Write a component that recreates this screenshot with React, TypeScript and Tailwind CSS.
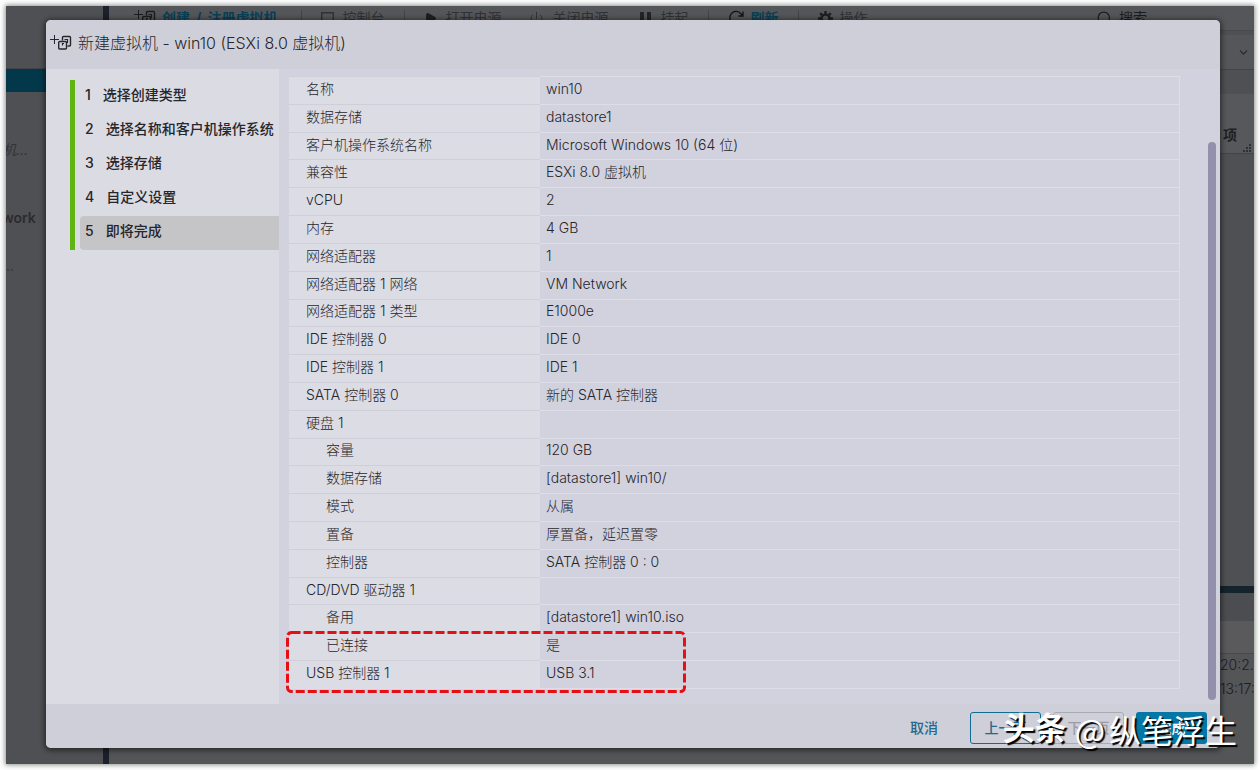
import React from "react";
import { Play, Power, Search, ChevronDown } from "lucide-react";

type Row = { label: string; value: string; nested?: boolean };

const rows: Row[] = [
  { label: "名称", value: "win10" },
  { label: "数据存储", value: "datastore1" },
  { label: "客户机操作系统名称", value: "Microsoft Windows 10 (64 位)" },
  { label: "兼容性", value: "ESXi 8.0 虚拟机" },
  { label: "vCPU", value: "2" },
  { label: "内存", value: "4 GB" },
  { label: "网络适配器", value: "1" },
  { label: "网络适配器 1 网络", value: "VM Network" },
  { label: "网络适配器 1 类型", value: "E1000e" },
  { label: "IDE 控制器 0", value: "IDE 0" },
  { label: "IDE 控制器 1", value: "IDE 1" },
  { label: "SATA 控制器 0", value: "新的 SATA 控制器" },
  { label: "硬盘 1", value: "" },
  { label: "容量", value: "120 GB", nested: true },
  { label: "数据存储", value: "[datastore1] win10/", nested: true },
  { label: "模式", value: "从属", nested: true },
  { label: "置备", value: "厚置备，延迟置零", nested: true },
  { label: "控制器", value: "SATA 控制器 0 : 0", nested: true },
  { label: "CD/DVD 驱动器 1", value: "" },
  { label: "备用", value: "[datastore1] win10.iso", nested: true },
  { label: "已连接", value: "是", nested: true },
  { label: "USB 控制器 1", value: "USB 3.1" },
];

const steps = ["选择创建类型", "选择名称和客户机操作系统", "选择存储", "自定义设置", "即将完成"];

function NewVmIcon() {
  return (
    <svg width="24" height="18" viewBox="0 0 24 18" fill="none" stroke="currentColor" aria-hidden="true">
      <path d="M0 5.5H9M4.5 1V10" />
      <path d="M12.5 6.5V3.5Q12.5 2.5 13.5 2.5H19.5Q20.5 2.5 20.5 3.5V11Q20.5 12 19.5 12H17.5" strokeWidth="1.4" />
      <rect x="8.7" y="7.5" width="7.8" height="7.5" rx="1" strokeWidth="1.4" />
      <path d="M12.5 11.5V9.5H14M14.5 5.5H17.5V9" strokeWidth="1.2" />
    </svg>
  );
}

function RefreshIcon() {
  return (
    <svg width="16" height="16" viewBox="0 0 16 16" fill="none" stroke="currentColor" strokeWidth="1.3" aria-hidden="true">
      <path d="M14 10A6.3 6.3 0 1 1 13 3.8L15 6M15 1.5V6H10.5" />
    </svg>
  );
}

function GearIcon() {
  return (
    <svg width="15" height="15" viewBox="0 0 15 15" fill="none" stroke="currentColor" aria-hidden="true">
      <circle cx="7.5" cy="7.5" r="4" strokeWidth="2.6" />
      <path d="M7.5 0V3M7.5 12V15M0 7.5H3M12 7.5H15M2.2 2.2L4.3 4.3M10.7 10.7L12.8 12.8M2.2 12.8L4.3 10.7M10.7 4.3L12.8 2.2" strokeWidth="2.4" />
    </svg>
  );
}

function Separator() {
  return (
    <span className="flex w-10 justify-center">
      <span className="h-4 w-px bg-[#434447]" />
    </span>
  );
}

function Toolbar() {
  return (
    <div className="flex h-[25px] shrink-0 items-center border-b border-[#48494c] bg-[#555659] pl-[25px] pr-1 text-sm text-[#303134]">
      <button className="mr-1 flex items-center gap-1 font-bold text-[#083f55]">
        <span className="text-[#1b1c1f]"><NewVmIcon /></span>
        <span className="flex gap-1.5"><span>创建</span><span>/</span><span>注册虚拟机</span></span>
      </button>
      <Separator />
      <button className="flex items-center gap-2">
        <svg width="13" height="13" viewBox="0 0 13 13" fill="none" stroke="currentColor" strokeWidth="1.4" aria-hidden="true">
          <path d="M0.7 0.7H12.3V10.5H0.7ZM3 12.3H10" />
        </svg>
        控制台
      </button>
      <Separator />
      <button className="flex items-center gap-2">
        <Play size={13} fill="currentColor" className="text-[#1e1f22]" />
        打开电源
      </button>
      <button className="ml-7 flex items-center gap-2">
        <Power size={15} strokeWidth={1.5} />
        关闭电源
      </button>
      <button className="ml-8 flex items-center gap-2">
        <svg width="12" height="12" viewBox="0 0 12 12" fill="#232427" aria-hidden="true">
          <path d="M0 0H4V12H0ZM7 0H11V12H7Z" />
        </svg>
        挂起
      </button>
      <Separator />
      <button className="flex items-center gap-1.5 font-bold text-[#083f55]">
        <span className="text-[#111214]"><RefreshIcon /></span>
        刷新
      </button>
      <Separator />
      <button className="flex items-center gap-1.5">
        <span className="text-[#1e1f22]"><GearIcon /></span>
        操作
      </button>
      <span className="ml-auto flex w-[154px] items-center gap-1.5 text-[#1b1c1f]">
        <Search size={17} strokeWidth={1.7} />
        搜索
      </span>
    </div>
  );
}

function Backdrop() {
  return (
    <div className="flex h-full min-h-0 w-full overflow-hidden bg-[#4f5053]">
      <div className="flex w-[97px] shrink-0 flex-col text-sm text-[#2a2b2e]">
        <div className="h-[63px] border-b border-[#434447]" />
        <div className="h-[23px] bg-[#03384b]" />
        <p className="mt-12 h-5 italic text-[#333437]"><span className="-ml-1">机...</span></p>
        <p className="mt-12 h-6 font-semibold"><span className="-ml-1">work</span></p>
        <p className="mt-6 h-5 text-[#333437]"><span className="-ml-1">...</span></p>
      </div>
      <div className="w-1.5 shrink-0 bg-[#1b202b]" />
      <div className="flex min-w-0 flex-1 flex-col">
        <Toolbar />
        <div className="mt-1 flex h-[35px] shrink-0 items-center justify-end border-b border-[#434447] bg-[#555659] pr-1">
          <ChevronDown size={13} className="text-[#242528]" />
        </div>
        <div className="h-6 shrink-0" />
        <div className="flex h-[60px] shrink-0 items-end justify-end border-b border-[#434447] bg-[#57585b] pr-0.5 text-sm font-semibold text-[#1e1f22]">
          <span className="pb-2 pr-1.5">项</span>
          <svg width="9" height="9" viewBox="0 0 9 9" fill="#303134" aria-hidden="true">
            <path d="M6 0h2v2h-2zM3 3h2v2h-2zM6 3h2v2h-2zM0 6h2v2h-2zM3 6h2v2h-2zM6 6h2v2h-2z" />
          </svg>
        </div>
        <div className="flex-1" />
        <div className="h-[7px] shrink-0 bg-[#14232c]" />
        <div className="h-7 shrink-0 bg-[#4c4d51]" />
        <div className="h-8 shrink-0 bg-[#5a5a5c]" />
        <div className="flex h-[111px] shrink-0 flex-col items-end border-t border-[#48494c] bg-[#545557] text-sm font-light text-[#1b1c1f]">
          <span className="w-[34px] whitespace-nowrap leading-[22px]">20:2...</span>
          <span className="w-[34px] whitespace-nowrap leading-[26px]">13:17:</span>
        </div>
      </div>
    </div>
  );
}

function Steps() {
  return (
    <nav className="w-[233px] shrink-0 bg-[#dbdbe3] pl-6 pt-[11px] font-medium">
      <ol className="border-l-[5px] border-[#60b515]">
        {steps.map((step, i) => {
          const active = i === steps.length - 1;
          return (
            <li
              key={step}
              aria-current={active ? "step" : undefined}
              className={
                active
                  ? "ml-[5px] flex h-[34px] items-center gap-3 rounded-l bg-[#c5c5c8] pb-1 pl-[5px]"
                  : "ml-[5px] flex h-[34px] items-center gap-3 pb-1 pl-[5px]"
              }
            >
              <span>{i + 1}</span>
              <span className="whitespace-nowrap">{step}</span>
            </li>
          );
        })}
      </ol>
    </nav>
  );
}

function Summary() {
  return (
    <div className="relative flex min-w-0 flex-1">
      <table className="w-full table-fixed border-collapse border-y border-r border-[#dddde7] text-left">
        <tbody>
          {rows.map((row, i) => (
            <tr key={i}>
              <th
                scope="row"
                className={
                  row.nested
                    ? "w-[251px] border-t border-[#cfcfd9] bg-[#dcdce4] p-0 pb-[3px] pl-[37px] font-light"
                    : "w-[251px] border-t border-[#cfcfd9] bg-[#dcdce4] p-0 pb-[3px] pl-[17px] font-light"
                }
              >
                {row.label}
              </th>
              <td className="border-t border-[#dddde7] p-0 pb-[3px] pl-1.5 font-light">{row.value}</td>
            </tr>
          ))}
        </tbody>
      </table>
      <svg className="absolute -bottom-1 -left-[3px]" width="400" height="62" fill="none" aria-hidden="true">
        <rect x="1.5" y="1.5" width="397" height="59" rx="4" stroke="#e60f14" strokeWidth="3" strokeDasharray="9 3" />
      </svg>
    </div>
  );
}

function Dialog() {
  return (
    <section
      role="dialog"
      aria-labelledby="dialog-title"
      className="flex min-h-0 w-full flex-col overflow-hidden rounded-[5px] bg-[#d2d2de] text-sm text-[#26262b] shadow-[0_1px_5px_2px_rgba(0,0,0,0.45)]"
    >
      <header className="flex h-[49px] shrink-0 items-center gap-1 bg-[#cfcfd9] pb-1 pl-1 text-base font-light">
        <NewVmIcon />
        <h1 id="dialog-title">新建虚拟机 - win10 (ESXi 8.0 虚拟机)</h1>
      </header>
      <div className="flex min-h-0 flex-1">
        <Steps />
        <div className="flex min-w-0 flex-1 pb-[15px] pl-2.5 pt-[7px]">
          <Summary />
        </div>
        <div className="flex w-10 justify-end pb-1 pr-1 pt-[73px]">
          <div className="w-2 rounded bg-[#9290aa]" />
        </div>
      </div>
      <footer className="flex h-11 shrink-0 items-center justify-end gap-3 bg-[#cfcfd9] pr-[13px] pt-1 font-medium">
        <button className="mr-5 text-[#22698d]">取消</button>
        <button className="h-8 w-[71px] rounded-[3px] border border-[#0f6c92] text-[#22698d]">上一页</button>
        <button disabled className="h-8 w-[71px] rounded-[3px] border border-[#aaaab3] text-[#9c9ca5]">下一页</button>
        <button className="h-8 w-[71px] rounded-[3px] bg-[#0477a6] text-white">完成</button>
      </footer>
    </section>
  );
}

export default function App() {
  return (
    <main className="h-screen bg-white p-1.5 font-['Inter','Noto_Sans_CJK_SC',sans-serif]">
      <div className="relative h-full shadow-[0_0_5px_1px_rgba(60,70,60,0.6)]">
        <Backdrop />
        <div className="absolute inset-0 flex pb-4 pl-10 pr-[34px] pt-3.5">
          <Dialog />
        </div>
        <p className="absolute bottom-3 right-[17px] flex gap-2 whitespace-nowrap text-[32px] leading-[46px] text-white [text-shadow:2px_2px_1px_#000]">
          <span className="font-bold">头条</span>
          <span className="flex gap-1 font-['Noto_Sans_CJK_SC',sans-serif]"><span>@</span><span>纵笔浮生</span></span>
        </p>
      </div>
    </main>
  );
}
